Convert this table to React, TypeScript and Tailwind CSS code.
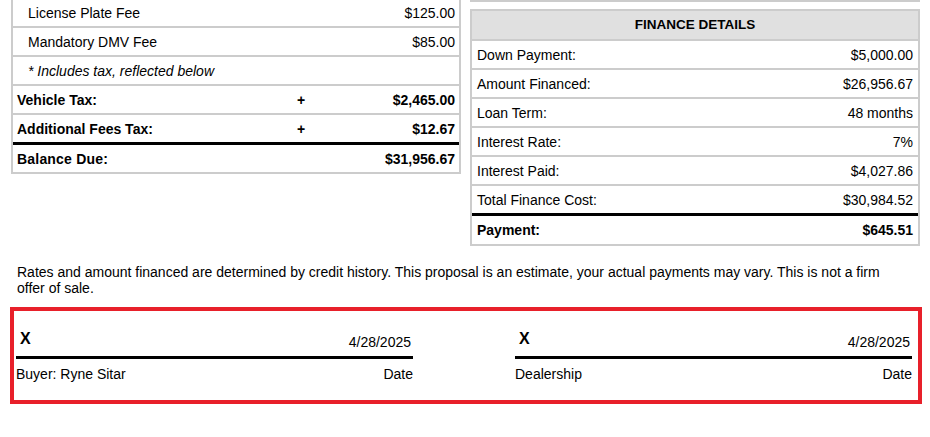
const fee = [
  { label: "License Plate Fee", value: "$125.00" },
  { label: "Mandatory DMV Fee", value: "$85.00" },
];

const finance = [
  { label: "Down Payment:", value: "$5,000.00" },
  { label: "Amount Financed:", value: "$26,956.67" },
  { label: "Loan Term:", value: "48 months" },
  { label: "Interest Rate:", value: "7%" },
  { label: "Interest Paid:", value: "$4,027.86" },
];

const SignatureBlock = ({ who, date }: { who: string; date: string }) => (
  <div className="flex w-[397px] flex-col">
    <div className="flex h-[45px] justify-between">
      <span className="pl-[4px] pt-[19px] text-[16px] font-bold leading-[18px]">X</span>
      <span className="pr-[2px] pt-[23px] leading-[16px]">{date}</span>
    </div>
    <div className="h-[3px] bg-black" />
    <div className="flex justify-between pt-[7px] leading-[16px]">
      <span>{who}</span>
      <span>Date</span>
    </div>
  </div>
);

export default function App() {
  return (
    <div
      className="min-h-[437px] w-[930px] overflow-hidden bg-white text-[14px] text-black"
      style={{ fontFamily: '"Liberation Sans", Arial, sans-serif' }}
    >
      <div className="flex items-start gap-[9px] pl-[11px]">
        {/* fees table, top cut off */}
        <div className="mt-[-3px] w-[450px] border-2 border-[#cccccc]">
          {fee.map((r) => (
            <div
              key={r.label}
              className="flex h-[29px] items-center justify-between border-b-2 border-[#cccccc] pl-[15px] pr-[4px] leading-[16px]"
            >
              <span>{r.label}</span>
              <span>{r.value}</span>
            </div>
          ))}
          <div className="flex h-[29px] items-center border-b-2 border-[#cccccc] pl-[15px] italic leading-[16px]">
            * Includes tax, reflected below
          </div>
          <div className="flex h-[29px] items-center border-b-2 border-[#cccccc] pl-[4px] pr-[4px] font-bold leading-[16px]">
            <span className="w-[280px]">Vehicle Tax:</span>
            <span>+</span>
            <span className="flex-1 text-right">$2,465.00</span>
          </div>
          <div className="flex h-[30px] items-center border-b-[3px] border-black pl-[4px] pr-[4px] font-bold leading-[16px]">
            <span className="w-[280px]">Additional Fees Tax:</span>
            <span>+</span>
            <span className="flex-1 text-right">$12.67</span>
          </div>
          <div className="flex h-[27px] items-center justify-between pl-[4px] pr-[4px] font-bold leading-[16px]">
            <span className="tracking-[0.2px]">Balance Due:</span>
            <span>$31,956.67</span>
          </div>
        </div>

        {/* finance details */}
        <div className="w-[450px]">
          <div className="h-[2px] bg-[#cccccc]" />
          <div className="mt-[7px] border-2 border-[#cccccc]">
            <div className="flex h-[30px] items-center justify-center border-b-2 border-[#cccccc] bg-[#e0e0e0] text-[13.5px] font-bold leading-[16px]">
              FINANCE DETAILS
            </div>
            {finance.map((r) => (
              <div
                key={r.label}
                className="flex h-[29px] items-center justify-between border-b-2 border-[#cccccc] pl-[5px] pr-[5px] leading-[16px]"
              >
                <span>{r.label}</span>
                <span>{r.value}</span>
              </div>
            ))}
            <div className="flex h-[30px] items-center justify-between border-b-[3px] border-black pl-[5px] pr-[5px] leading-[16px]">
              <span>Total Finance Cost:</span>
              <span>$30,984.52</span>
            </div>
            <div className="flex h-[28px] items-center justify-between pl-[5px] pr-[5px] font-bold leading-[16px]">
              <span>Payment:</span>
              <span>$645.51</span>
            </div>
          </div>
        </div>
      </div>

      <p className="ml-[17px] mt-[18px] w-[888px] leading-[16px]">
        Rates and amount financed are determined by credit history. This proposal is an estimate, your actual
        payments may vary. This is not a firm offer of sale.
      </p>

      <div className="ml-[10px] mt-[11px] flex h-[97px] w-[912px] justify-between border-4 border-[#e8202a] pl-[2px] pr-[6px]">
        <SignatureBlock who="Buyer: Ryne Sitar" date="4/28/2025" />
        <SignatureBlock who="Dealership" date="4/28/2025" />
      </div>
    </div>
  );
}
